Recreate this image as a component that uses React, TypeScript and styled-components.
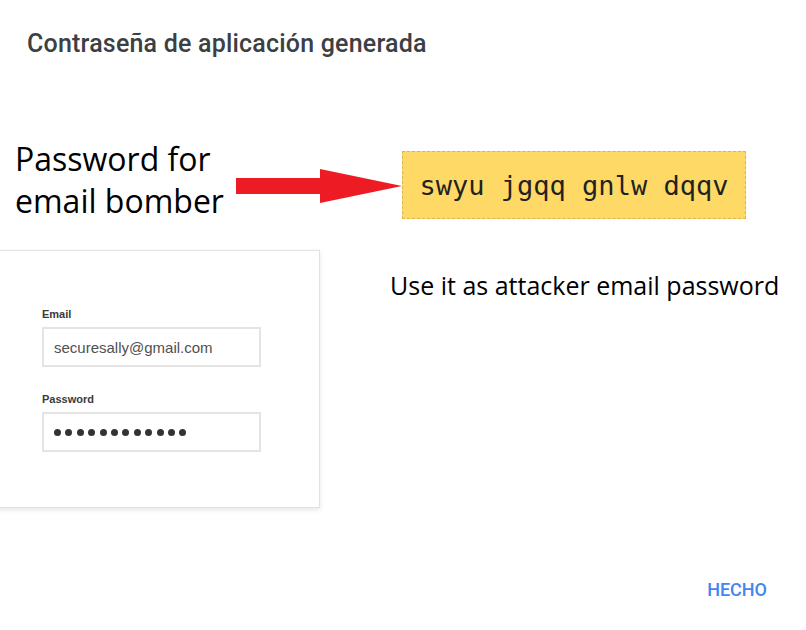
import styled, { createGlobalStyle } from 'styled-components'

const GlobalStyle = createGlobalStyle`
  html, body {
    margin: 0;
    padding: 0;
    background: #ffffff;
  }
`

const Dialog = styled.div`
  width: 806px;
  height: 630px;
  display: flex;
  flex-direction: column;
  background: #ffffff;
  overflow: hidden;
`

const Title = styled.h2`
  margin: 0;
  padding: 29px 0 0 27px;
  font-family: Roboto, 'Liberation Sans', sans-serif;
  font-size: 25px;
  font-weight: 500;
  letter-spacing: 0.2px;
  color: #3c4043;
`

const AnnotationRow = styled.div`
  display: flex;
  align-items: flex-start;
  margin-top: 80px;
  padding-left: 15px;
`

const Caption = styled.div`
  width: 221px;
  font-family: 'Open Sans', 'Noto Sans', sans-serif;
  font-size: 32px;
  line-height: 42px;
  color: #000000;
`

const Arrow = styled.svg`
  display: block;
  margin-top: 30px;
  flex-shrink: 0;
`

const PasswordBox = styled.div`
  box-sizing: border-box;
  width: 344px;
  height: 68px;
  margin-top: 13px;
  display: flex;
  align-items: center;
  justify-content: center;
  background: #ffd966;
  border: 1px dashed #d6b656;
  font-family: 'DejaVu Sans Mono', 'Liberation Mono', monospace;
  font-size: 27px;
  color: #222222;
`

const LowerRow = styled.div`
  display: flex;
  align-items: flex-start;
  margin-top: 28px;
`

const LoginCard = styled.div`
  box-sizing: border-box;
  width: 330px;
  margin-left: -10px;
  padding: 57px 0 55px 51px;
  background: #ffffff;
  border: 1px solid #e2e2e2;
  box-shadow: 0 2px 5px rgba(0, 0, 0, 0.1);
  display: flex;
  flex-direction: column;
`

const FieldLabel = styled.label<{ $gapTop?: number }>`
  margin-top: ${(p) => p.$gapTop ?? 0}px;
  font-family: 'Liberation Sans', Arial, sans-serif;
  font-size: 11px;
  font-weight: 700;
  color: #3a3a3a;
`

const Field = styled.div`
  box-sizing: border-box;
  width: 219px;
  height: 40px;
  margin-top: 7px;
  padding: 0 10px;
  display: flex;
  align-items: center;
  border: 2px solid #e4e4e4;
  font-family: 'Liberation Sans', Arial, sans-serif;
  font-size: 15px;
  color: #505050;
`

const Dots = styled.div`
  display: flex;
  gap: 4.4px;
`

const Dot = styled.span`
  width: 7px;
  height: 7px;
  border-radius: 50%;
  background: #333333;
`

const Note = styled.div`
  margin: 18px 0 0 70px;
  font-family: 'Open Sans', 'Noto Sans', sans-serif;
  font-size: 25px;
  color: #000000;
  white-space: nowrap;
`

const Footer = styled.div`
  margin-top: auto;
  display: flex;
  justify-content: flex-end;
  padding: 0 39px 30px 0;
`

const DoneButton = styled.button`
  border: none;
  background: none;
  padding: 0;
  font-family: Roboto, 'Liberation Sans', sans-serif;
  font-size: 18px;
  font-weight: 500;
  color: #4285f4;
  cursor: pointer;
`

export default function App() {
  return (
    <>
      <GlobalStyle />
      <Dialog>
        <Title>Contraseña de aplicación generada</Title>
        <AnnotationRow>
          <Caption>
            Password for
            <br />
            email bomber
          </Caption>
          <Arrow width="166" height="36" viewBox="0 0 166 36">
            <polygon points="0,10 84,10 84,1 166,18 84,35 84,26 0,26" fill="#ed1c24" />
          </Arrow>
          <PasswordBox>swyu jgqq gnlw dqqv</PasswordBox>
        </AnnotationRow>
        <LowerRow>
          <LoginCard>
            <FieldLabel>Email</FieldLabel>
            <Field>securesally@gmail.com</Field>
            <FieldLabel $gapTop={26}>Password</FieldLabel>
            <Field>
              <Dots>
                {Array.from({ length: 12 }).map((_, i) => (
                  <Dot key={i} />
                ))}
              </Dots>
            </Field>
          </LoginCard>
          <Note>Use it as attacker email password</Note>
        </LowerRow>
        <Footer>
          <DoneButton>HECHO</DoneButton>
        </Footer>
      </Dialog>
    </>
  )
}
